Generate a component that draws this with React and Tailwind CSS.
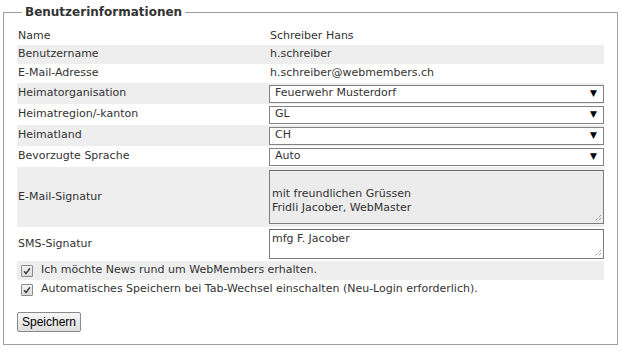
import React from "react";

const font = { fontFamily: '"DejaVu Sans", Verdana, sans-serif' };

function Select({ value }) {
  return (
    <div className="flex items-center justify-between h-[18px] w-full border border-[#828282] bg-white pl-[5px] pr-[6px] text-[11px] text-[#333]">
      <span>{value}</span>
      <span className="text-[9px] text-black leading-none">▼</span>
    </div>
  );
}

function Resize() {
  return (
    <svg className="absolute right-[1px] bottom-[1px]" width="9" height="9" viewBox="0 0 9 9">
      <path d="M8 2 L2 8 M8 5 L5 8" stroke="#777" strokeWidth="1" strokeDasharray="1 1" />
    </svg>
  );
}

function Check() {
  return (
    <span className="flex items-center justify-center w-[12px] h-[12px] border border-[#8c8c8c] bg-gradient-to-b from-[#f4f4f4] to-[#dcdcdc] rounded-[1px]">
      <svg width="8" height="8" viewBox="0 0 8 8">
        <path d="M1 4.2 L3 6.5 L7 1.2" stroke="#444" strokeWidth="1.6" fill="none" />
      </svg>
    </span>
  );
}

function Row({ label, gray, h = "h-[19px]", children }) {
  return (
    <div className={`flex items-center ${h} ${gray ? "bg-[#eeeeee]" : ""}`}>
      <div className="w-[252px] pl-[1px]">{label}</div>
      <div className="flex-1">{children}</div>
    </div>
  );
}

export default function App() {
  return (
    <div className="bg-white w-[622px] h-[352px] pt-[4px] pl-[3px] text-[11px] text-[#333]" style={font}>
      <fieldset className="w-[615px] h-[341px] border border-[#a0a0a0] px-[13px] pt-[7px]">
        <legend className="ml-[5px] px-[3px] text-[12px] font-bold leading-[16px] text-[#333]">
          Benutzerinformationen
        </legend>
        <div className="flex flex-col">
          <Row label="Name" h="h-[18px]">
            <span className="pl-[1px]">Schreiber Hans</span>
          </Row>
          <Row label="Benutzername" gray>
            <span className="pl-[1px]">h.schreiber</span>
          </Row>
          <Row label="E-Mail-Adresse">
            <span className="pl-[1px]">h.schreiber@webmembers.ch</span>
          </Row>
          <Row label="Heimatorganisation" gray h="h-[21px]">
            <Select value="Feuerwehr Musterdorf" />
          </Row>
          <Row label="Heimatregion/-kanton" h="h-[21px]">
            <Select value="GL" />
          </Row>
          <Row label="Heimatland" gray h="h-[21px]">
            <Select value="CH" />
          </Row>
          <Row label="Bevorzugte Sprache" h="h-[21px]">
            <Select value="Auto" />
          </Row>
          <Row label="E-Mail-Signatur" gray h="h-[60px]">
            <div className="relative h-[54px] w-full border border-[#7d7d7d] border-t-[#6a6a6a] bg-[#ececec] pl-[2px] pt-[2px] leading-[14px]">
              <div>&nbsp;</div>
              <div>mit freundlichen Grüssen</div>
              <div>Fridli Jacober, WebMaster</div>
              <Resize />
            </div>
          </Row>
          <Row label="SMS-Signatur" h="h-[34px]">
            <div className="relative h-[30px] w-full border border-[#7d7d7d] border-t-[#6a6a6a] bg-white pl-[2px] pt-[2px] leading-[14px]">
              <div>mfg F. Jacober</div>
              <Resize />
            </div>
          </Row>
          <div className="flex items-center h-[19px] bg-[#eeeeee] pl-[4px] gap-[8px]">
            <Check />
            <span>Ich möchte News rund um WebMembers erhalten.</span>
          </div>
          <div className="flex items-center h-[19px] pl-[4px] gap-[8px]">
            <Check />
            <span>Automatisches Speichern bei Tab-Wechsel einschalten (Neu-Login erforderlich).</span>
          </div>
          <div className="pt-[13px]">
            <button className="h-[20px] w-[64px] border border-[#8a8a8a] bg-gradient-to-b from-[#f6f6f6] to-[#dedede] text-black rounded-[2px]" style={{ fontFamily: '"Liberation Sans", Arial, sans-serif', fontSize: "12px" }}>
              Speichern
            </button>
          </div>
        </div>
      </fieldset>
    </div>
  );
}
